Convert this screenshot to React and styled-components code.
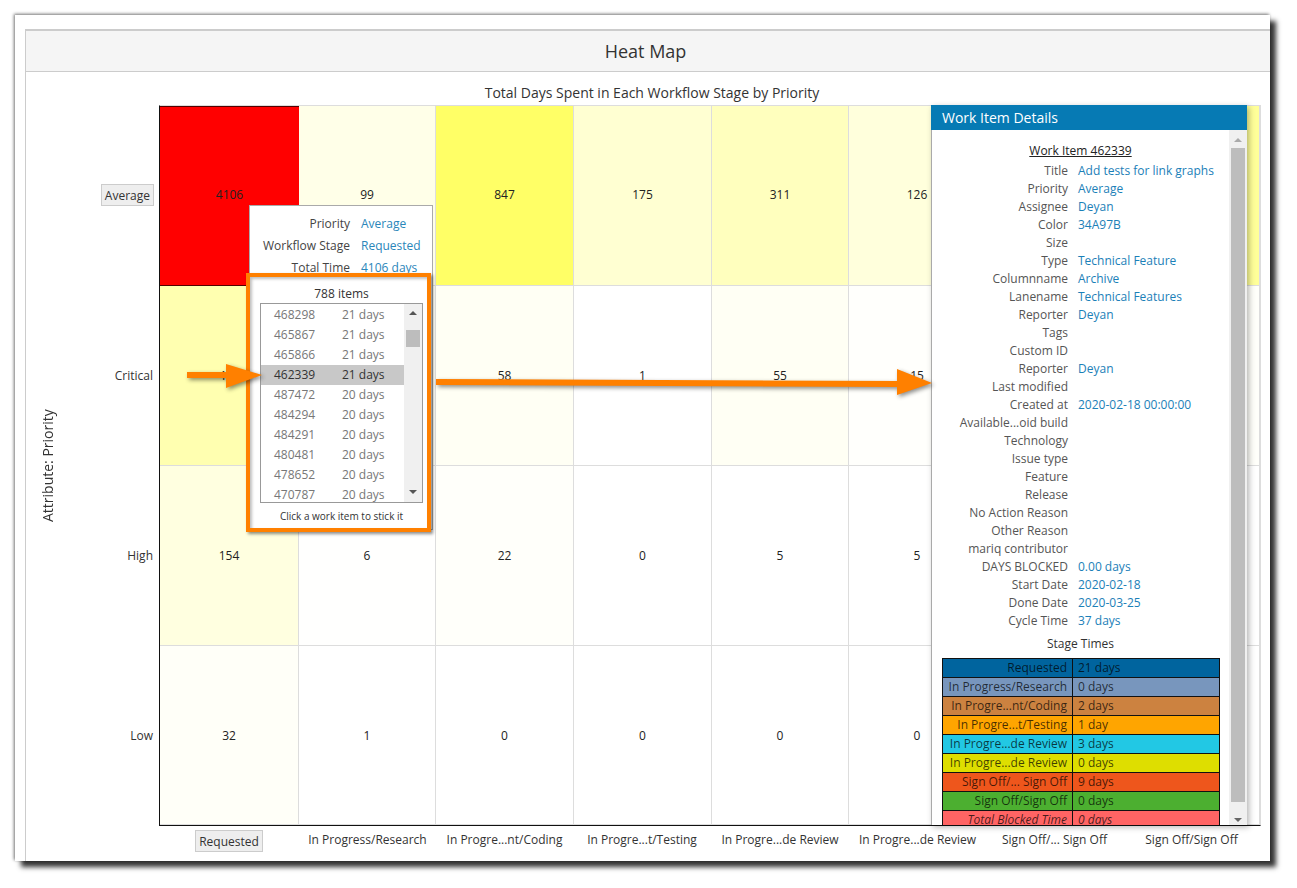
import React from "react";
import styled, { createGlobalStyle } from "styled-components";

const Global = createGlobalStyle`
  html, body { margin: 0; padding: 0; background: #fff; }
  body { font-family: "Open Sans", "Liberation Sans", sans-serif; font-size: 12px; color: #333; }
  * { box-sizing: border-box; }
`;

const Page = styled.div`
  width: 1297px; height: 888px; padding: 15px 0 0 15px; overflow: hidden; background: #fff;
`;
const Window = styled.div`
  width: 1255px; height: 846px; padding: 14px 0 0 10px; background: #fff;
  box-shadow: 6px 6px 5px rgba(0,0,0,.8), -1px -1px 3px rgba(0,0,0,.55);
`;
const Panel = styled.section`
  height: 100%; border-left: 1px solid #ccc; border-top: 2px solid #ccc;
`;
const Header = styled.header`
  height: 41px; background: #f5f5f5; border-bottom: 1px solid #ccc; padding-right: 5px;
  display: flex; align-items: center; justify-content: center;
  font-size: 18px; color: #333;
`;
const ChartTitle = styled.div`
  height: 33px; padding: 11px 0 0 8px; text-align: center; font-size: 14px; line-height: 20px; color: #333;
`;
const Chart = styled.div`
  display: grid; grid-template-columns: 133px 1102px; grid-template-rows: 721px 35px;
`;
const YAxis = styled.div`
  display: grid; grid-template-columns: 42px 91px;
`;
const AxisTitle = styled.div`
  display: flex; align-items: center; justify-content: center;
  writing-mode: vertical-rl; transform: rotate(180deg); font-size: 14px; color: #333;
`;
const YLabels = styled.div`
  display: grid; grid-template-rows: repeat(4, 180px); padding-right: 6px;
`;
const YLabel = styled.div`
  display: flex; align-items: center; justify-content: flex-end; color: #333;
`;
const Chip = styled.span`
  display: inline-flex; align-items: center; height: 22px; padding: 0 3px;
  background: #eee; border: 1px solid #ccc; color: #333;
`;
const YChip = styled(Chip)`margin-right: -1px;`;
const XChip = styled(Chip)`margin: 4px 0 0 -1px;`;
const Plot = styled.div`
  position: relative; height: 721px;
  border-left: 1px solid #111; border-bottom: 1px solid #111; border-top: 1px solid #ddd; border-right: 1px solid #ddd;
  display: grid; grid-template-columns: 139px 137px 138px 138px 137px 137px 137px 137px;
  grid-template-rows: 180px 180px 180px 179px;
`;
const Cell = styled.div`
  display: flex; align-items: center; justify-content: center;
  background: ${p => p.$bg}; color: #222;
  border-right: 1px solid #ddd; border-bottom: 1px solid #ddd;
  padding-bottom: ${p => (p.$top ? 2 : 0)}px;
  ${p => p.$hot && "border: none; border-bottom: 1px solid #500; box-shadow: inset 0 1px 0 #500;"}
`;
const Corner = styled.div``;
const XLabels = styled.div`
  display: grid; grid-template-columns: 139px 137px 137px 138px 138px 137px 137px 137px;
  padding: 3px 0 0 1px; align-items: start;
`;
const XLabel = styled.div`
  display: flex; justify-content: center; align-items: center; height: 20px; color: #333; white-space: nowrap;
`;

const Tooltip = styled.div`
  position: absolute; left: 89px; top: 99px; width: 184px; height: 325px; z-index: 2;
  background: #fff; border: 1px solid #aaa; padding-top: 7px;
`;
const TipRow = styled.div`
  display: grid; grid-template-columns: 100px 1fr; column-gap: 11px; height: 22px; line-height: 22px;
`;
const TipLabel = styled.div`text-align: right; color: #444; white-space: nowrap;`;
const TipValue = styled.div`color: #2a86ba; white-space: nowrap;`;
const Highlight = styled.div`
  position: absolute; left: -4px; top: 67px; width: 185px; height: 259px;
  background: #fff; border: 4px solid #ff8000; padding: 8px 0 0 10px;
  box-shadow: 2px 2px 3px rgba(0,0,0,.45), inset 2px 2px 3px rgba(0,0,0,.25);
`;
const ItemsTitle = styled.div`
  width: 163px; height: 18px; line-height: 18px; text-align: center; color: #333;
`;
const ItemsBox = styled.div`
  width: 163px; height: 200px; border: 1px solid #999; display: flex; overflow: hidden;
`;
const ItemsList = styled.div`flex: 1; padding-top: 1px; overflow: hidden;`;
const Item = styled.div`
  display: grid; grid-template-columns: 68px 1fr; height: 20px; line-height: 20px; padding-left: 13px;
  color: ${p => (p.$active ? "#333" : "#777")};
  background: ${p => (p.$active ? "#c8c8c8" : "transparent")};
`;
const Scroll = styled.div`
  width: ${p => p.$w}px; flex: none; background: #f0f0f0; position: relative;
`;
const Thumb = styled.div`
  position: absolute; left: 2px; right: 2px; top: ${p => p.$top}px; height: ${p => p.$h}px; background: #bdbdbd;
`;
const ScrollArrow = styled.div`
  position: absolute; left: 50%; margin-left: -4px; width: 0; height: 0;
  border-left: 4px solid transparent; border-right: 4px solid transparent;
  ${p => p.$up
    ? `top: ${p.$at}px; border-bottom: 4px solid ${p.$c || "#555"};`
    : `bottom: ${p.$at}px; border-top: 4px solid ${p.$c || "#555"};`}
`;
const ItemsHint = styled.div`
  width: 163px; margin-top: 6px; text-align: center; font-size: 10px; line-height: 15px; color: #333; white-space: nowrap;
`;

const Details = styled.aside`
  position: absolute; left: 771px; top: -1px; bottom: 0; width: 316px; z-index: 3; overflow: hidden;
  display: flex; flex-direction: column; background: #fff;
  box-shadow: 2px 2px 6px rgba(0,0,0,.3);
`;
const DetailsHeader = styled.div`
  height: 25px; flex: none; background: #067ab4; color: #fff; font-size: 14px; line-height: 25px; padding-left: 11px;
`;
const DetailsBody = styled.div`
  flex: 1; min-height: 0; display: flex; border-left: 1px solid #aaa; border-right: 1px solid #aaa;
`;
const DetailsContent = styled.div`
  width: 297px; flex: none; padding-top: 12px; overflow: hidden;
`;
const WorkHeading = styled.div`
  height: 20px; line-height: 18px; text-align: center; color: #222; text-decoration: underline;
`;
const DetailRow = styled.div`
  display: grid; grid-template-columns: 136px 1fr; column-gap: 10px; height: 18px; line-height: 18px;
`;
const DetailLabel = styled.div`text-align: right; color: #555; white-space: nowrap;`;
const DetailValue = styled.div`color: #1b80b8; white-space: nowrap;`;
const StageTitle = styled.div`
  margin-top: 5px; height: 23px; line-height: 18px; text-align: center; color: #333;
`;
const StageTable = styled.table`
  border-collapse: collapse; margin-left: 10px; width: 278px; table-layout: fixed;
`;
const StageRow = styled.tr`background: ${p => p.$bg};`;
const StageName = styled.td`
  width: 130px; height: 19px; padding: 0 5px 1px 0; border: 1px solid #111; text-align: right; line-height: 16px;
  color: rgba(0,0,0,.72); white-space: nowrap; font-style: ${p => (p.$i ? "italic" : "normal")};
`;
const StageValue = styled.td`
  height: 19px; padding: 0 0 1px 5px; border: 1px solid #111; line-height: 16px;
  color: rgba(0,0,0,.72); white-space: nowrap; font-style: ${p => (p.$i ? "italic" : "normal")};
`;
const ArrowSvg = styled.svg`
  position: absolute; z-index: 4; overflow: visible; pointer-events: none;
  left: ${p => p.$x}px; top: ${p => p.$y}px;
  filter: drop-shadow(2px 2px 2px rgba(0,0,0,.45));
`;

const columns = ["Requested", "In Progress/Research", "In Progre...nt/Coding", "In Progre...t/Testing", "In Progre...de Review", "In Progre...de Review", "Sign Off/... Sign Off", "Sign Off/Sign Off"];
const rows = [
  { name: "Average", chip: true, cells: [["4106", "#ff0000"], ["99", "#ffffe8"], ["847", "#ffff66"], ["175", "#ffffd2"], ["311", "#ffffbe"], ["126", "#ffffdc"], ["", "#ffffe0"], ["", "#ffff99"]] },
  { name: "Critical", cells: [["416", "#ffffb0"], ["", "#fffff6"], ["58", "#fffff4"], ["1", "#ffffff"], ["55", "#fffff4"], ["15", "#fffffc"], ["", "#fffffe"], ["", "#fffffa"]] },
  { name: "High", cells: [["154", "#ffffe0"], ["6", "#fffffe"], ["22", "#fffffa"], ["0", "#ffffff"], ["5", "#ffffff"], ["5", "#ffffff"], ["", "#ffffff"], ["", "#ffffff"]] },
  { name: "Low", cells: [["32", "#fffff8"], ["1", "#ffffff"], ["0", "#ffffff"], ["0", "#ffffff"], ["0", "#ffffff"], ["0", "#ffffff"], ["", "#ffffff"], ["", "#ffffff"]] },
];
const items = [["468298", "21 days"], ["465867", "21 days"], ["465866", "21 days"], ["462339", "21 days"], ["487472", "20 days"], ["484294", "20 days"], ["484291", "20 days"], ["480481", "20 days"], ["478652", "20 days"], ["470787", "20 days"]];
const details = [["Title", "Add tests for link graphs"], ["Priority", "Average"], ["Assignee", "Deyan"], ["Color", "34A97B"], ["Size", ""], ["Type", "Technical Feature"], ["Columnname", "Archive"], ["Lanename", "Technical Features"], ["Reporter", "Deyan"], ["Tags", ""], ["Custom ID", ""], ["Reporter", "Deyan"], ["Last modified", ""], ["Created at", "2020-02-18 00:00:00"], ["Available...oid build", ""], ["Technology", ""], ["Issue type", ""], ["Feature", ""], ["Release", ""], ["No Action Reason", ""], ["Other Reason", ""], ["mariq contributor", ""], ["DAYS BLOCKED", "0.00 days"], ["Start Date", "2020-02-18"], ["Done Date", "2020-03-25"], ["Cycle Time", "37 days"]];
const stages = [["Requested", "21 days", "#00649e"], ["In Progress/Research", "0 days", "#7896bd"], ["In Progre...nt/Coding", "2 days", "#cc8240"], ["In Progre...t/Testing", "1 day", "#ffa500"], ["In Progre...de Review", "3 days", "#22c8e4"], ["In Progre...de Review", "0 days", "#dede00"], ["Sign Off/... Sign Off", "9 days", "#ee561c"], ["Sign Off/Sign Off", "0 days", "#4caf30"], ["Total Blocked Time", "0 days", "#ff6464", true]];

export default function App() {
  return (
    <Page>
      <Global />
      <Window>
        <Panel>
          <Header>Heat Map</Header>
          <ChartTitle>Total Days Spent in Each Workflow Stage by Priority</ChartTitle>
          <Chart>
            <YAxis>
              <AxisTitle>Attribute: Priority</AxisTitle>
              <YLabels>
                {rows.map(r => (
                  <YLabel key={r.name}>{r.chip ? <YChip>{r.name}</YChip> : r.name}</YLabel>
                ))}
              </YLabels>
            </YAxis>
            <Plot>
              {rows.map((r, ri) => r.cells.map(([v, bg], i) => (
                <Cell key={r.name + i} $bg={bg} $hot={bg === "#ff0000"} $top={ri === 0}>{v}</Cell>
              )))}
              <Tooltip>
                <TipRow><TipLabel>Priority</TipLabel><TipValue>Average</TipValue></TipRow>
                <TipRow><TipLabel>Workflow Stage</TipLabel><TipValue>Requested</TipValue></TipRow>
                <TipRow><TipLabel>Total Time</TipLabel><TipValue>4106 days</TipValue></TipRow>
                <Highlight>
                  <ItemsTitle>788 items</ItemsTitle>
                  <ItemsBox>
                    <ItemsList>
                      {items.map(([id, d]) => (
                        <Item key={id} $active={id === "462339"}><span>{id}</span><span>{d}</span></Item>
                      ))}
                    </ItemsList>
                    <Scroll $w={18}>
                      <ScrollArrow $up $at={7} />
                      <Thumb $top={26} $h={17} />
                      <ScrollArrow $at={8} />
                    </Scroll>
                  </ItemsBox>
                  <ItemsHint>Click a work item to stick it</ItemsHint>
                </Highlight>
              </Tooltip>
              <Details>
                <DetailsHeader>Work Item Details</DetailsHeader>
                <DetailsBody>
                  <DetailsContent>
                    <WorkHeading>Work Item 462339</WorkHeading>
                    {details.map(([k, v], i) => (
                      <DetailRow key={k + i}><DetailLabel>{k}</DetailLabel><DetailValue>{v}</DetailValue></DetailRow>
                    ))}
                    <StageTitle>Stage Times</StageTitle>
                    <StageTable>
                      <tbody>
                        {stages.map(([n, v, bg, it], i) => (
                          <StageRow key={i} $bg={bg}>
                            <StageName $i={it}>{n}</StageName>
                            <StageValue $i={it}>{v}</StageValue>
                          </StageRow>
                        ))}
                      </tbody>
                    </StageTable>
                  </DetailsContent>
                  <Scroll $w={18}>
                    <ScrollArrow $up $at={8} $c="#aaa" />
                    <Thumb $top={18} $h={654} />
                    <ScrollArrow $at={3} $c="#666" />
                  </Scroll>
                </DetailsBody>
              </Details>
              <ArrowSvg $x={27} $y={257} width="76" height="26" viewBox="0 0 76 26">
                <polygon fill="#ff8000" points="0,9 39,9 39,1 75,12 39,25 39,15 0,15" />
              </ArrowSvg>
              <ArrowSvg $x={276} $y={262} width="497" height="28" viewBox="0 0 497 28">
                <polygon fill="#ff8000" points="0,11 461,13 461,1 496,15 461,27 461,19 0,17" />
              </ArrowSvg>
            </Plot>
            <Corner />
            <XLabels>
              {columns.map((c, i) => (
                <XLabel key={i}>{i === 0 ? <XChip>{c}</XChip> : c}</XLabel>
              ))}
            </XLabels>
          </Chart>
        </Panel>
      </Window>
    </Page>
  );
}
